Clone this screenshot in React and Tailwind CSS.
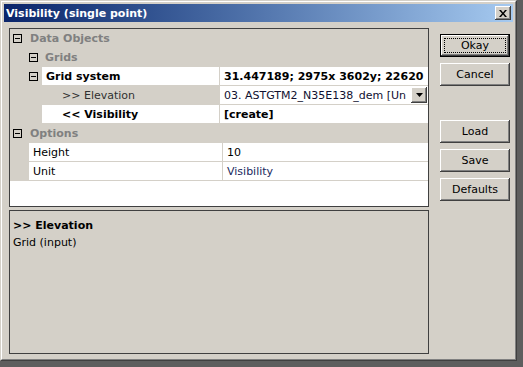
import React from "react";

// small boxed minus used by the property tree
const Minus = () => (
  <span className="w-[9px] h-[9px] border border-black flex items-center justify-center">
    <span className="w-[5px] h-px bg-black" />
  </span>
);

const Category = ({ label, level }) => (
  <div className="h-[19px] flex items-center bg-[#d4d0c8] border-b border-[#d4d0c8]">
    <div className={`${level ? "w-[35px] pl-[19px]" : "w-[20px] pl-[3px]"} flex items-center`}>
      <Minus />
    </div>
    <span className="font-bold text-[#808080]">{label}</span>
  </div>
);

const Row = ({ indent, labelW, box, label, labelBg, labelPad, bold, labelColor, children }) => (
  <div className="h-[19px] flex border-b border-[#d4d0c8] bg-white">
    <div className={`${indent} h-full bg-[#d4d0c8] flex items-center pl-[19px]`}>
      {box && <Minus />}
    </div>
    <div
      className={`${labelW} h-full flex items-center ${labelBg} ${labelPad} ${bold ? "font-bold" : ""} ${labelColor || "text-black"} whitespace-nowrap`}
    >
      {label}
    </div>
    <div className="w-px h-full bg-[#d4d0c8]" />
    <div className="flex-1 h-full flex items-center pl-[4px] whitespace-nowrap">
      {children}
    </div>
  </div>
);

const Btn = ({ label, isDefault }) => (
  <div className={`w-[70px] h-[23px] ${isDefault ? "border border-black" : ""}`}>
    <div className="w-full h-full bg-[#d4d0c8] shadow-[inset_-1px_-1px_0_#404040,inset_1px_1px_0_#ffffff,inset_-2px_-2px_0_#808080] flex items-center justify-center p-[3px]">
      <div
        className={`w-full h-full flex items-center justify-center text-black ${isDefault ? "border border-dotted border-black" : ""}`}
      >
        {label}
      </div>
    </div>
  </div>
);

export default function App() {
  return (
    <div className="w-[523px] h-[367px] bg-[#5e5e5e] overflow-hidden text-[11px] leading-[17px] font-['DejaVu_Sans',sans-serif]">
      <div className="w-[517px] h-[361px] border border-t-[#d4d0c8] border-l-[#d4d0c8] border-r-[#404040] border-b-[#404040]">
        <div className="h-full border border-t-white border-l-white border-r-[#808080] border-b-[#808080] bg-[#d4d0c8] p-[2px] flex flex-col">
          {/* title bar */}
          <div className="h-[18px] flex items-center justify-between bg-gradient-to-r from-[#0a246a] to-[#a6caf0] pl-[2px] pr-[2px]">
            <span className="text-white font-bold">Visibility (single point)</span>
            <div className="w-[16px] h-[14px] bg-[#d4d0c8] shadow-[inset_-1px_-1px_0_#404040,inset_1px_1px_0_#ffffff,inset_-2px_-2px_0_#808080] flex items-center justify-center">
              <svg width="8" height="7" viewBox="0 0 8 7">
                <path d="M0 0h2l2 2.5L6 0h2L5 3.5 8 7H6L4 4.5 2 7H0l3-3.5z" fill="#000" />
              </svg>
            </div>
          </div>

          <div className="flex pt-[6px] pl-[5px]">
            {/* left: property tree + description */}
            <div className="w-[420px] flex flex-col gap-[3px]">
              <div className="h-[179px] border border-[#404040] bg-white flex flex-col">
                <Category label="Data Objects" level={0} />
                <Category label="Grids" level={1} />
                <Row indent="w-[32px]" labelW="w-[177px]" box label="Grid system" labelBg="bg-white" labelPad="pl-[4px]" bold>
                  <span className="font-bold text-black">31.447189; 2975x 3602y; 22620</span>
                </Row>
                <Row indent="w-[32px]" labelW="w-[177px]" label=">> Elevation" labelBg="bg-[#d4d0c8]" labelPad="pl-[20px]" labelColor="text-[#303030]">
                  <div className="flex-1 flex items-center justify-between pr-px">
                    <span className="text-[#101030]">03. ASTGTM2_N35E138_dem [Un</span>
                    <div className="w-[16px] h-[16px] bg-[#d4d0c8] shadow-[inset_-1px_-1px_0_#404040,inset_1px_1px_0_#ffffff,inset_-2px_-2px_0_#808080] flex items-center justify-center">
                      <svg width="7" height="4" viewBox="0 0 7 4">
                        <path d="M0 0h7L3.5 4z" fill="#000" />
                      </svg>
                    </div>
                  </div>
                </Row>
                <Row indent="w-[32px]" labelW="w-[177px]" label="<< Visibility" labelBg="bg-white" labelPad="pl-[20px]" bold>
                  <span className="font-bold text-black">[create]</span>
                </Row>
                <Category label="Options" level={0} />
                <Row indent="w-[16px]" labelW="w-[193px]" label="Height" labelBg="bg-white" labelPad="pl-[4px]">
                  <span className="text-black">10</span>
                </Row>
                <Row indent="w-[16px]" labelW="w-[193px]" label="Unit" labelBg="bg-white" labelPad="pl-[4px]">
                  <span className="text-[#1a2a60]">Visibility</span>
                </Row>
              </div>

              <div className="h-[144px] border border-[#404040] bg-[#d4d0c8] pt-[6px] pl-[3px]">
                <div className="font-bold text-black">&gt;&gt; Elevation</div>
                <div className="text-black">Grid (input)</div>
              </div>
            </div>

            {/* right: buttons */}
            <div className="flex flex-col pl-[11px] pt-[6px]">
              <div className="flex flex-col gap-[6px]">
                <Btn label="Okay" isDefault />
                <Btn label="Cancel" />
              </div>
              <div className="flex flex-col gap-[6px] mt-[34px]">
                <Btn label="Load" />
                <Btn label="Save" />
                <Btn label="Defaults" />
              </div>
            </div>
          </div>
        </div>
      </div>
    </div>
  );
}
